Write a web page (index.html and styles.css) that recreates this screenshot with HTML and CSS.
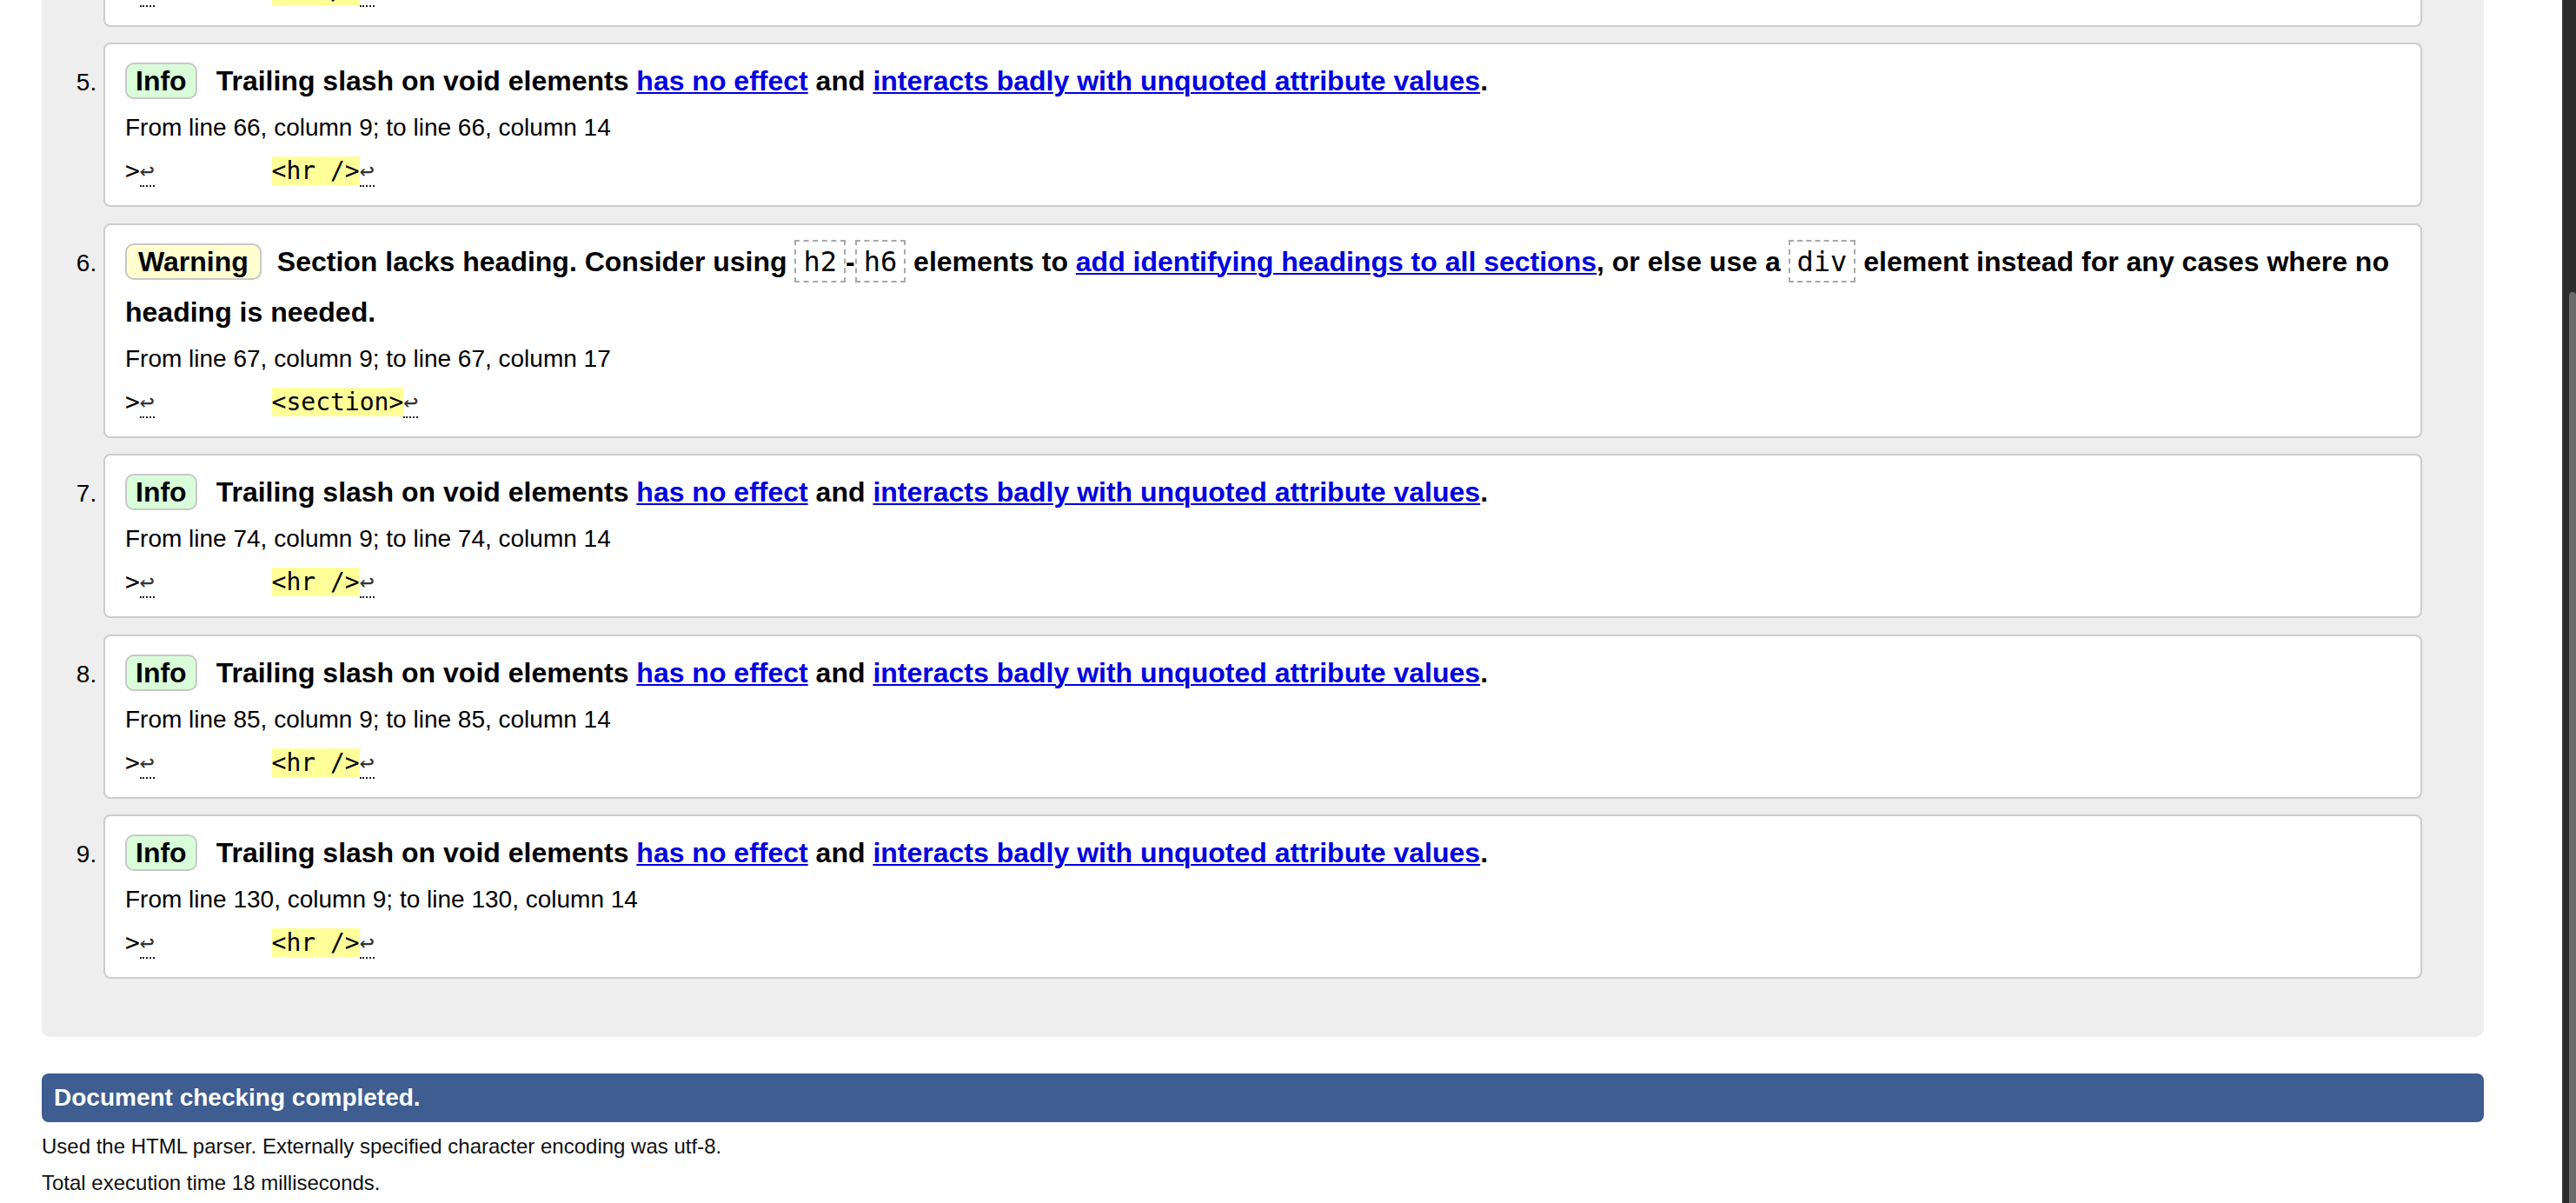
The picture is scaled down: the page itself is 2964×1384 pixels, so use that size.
FILE: index.html
```html
<!DOCTYPE html>
<html lang="en">
<head>
<meta charset="utf-8">
<title>Nu Html Checker</title>
<link rel="stylesheet" href="styles.css">
</head>
<body>
<div class="page">
  <main class="main">
    <section class="results">
      <ol class="messages" start="4">
        <li class="card">
          <p class="msg"><span class="badge info">Info</span>Trailing slash on void elements <a href="#">has no effect</a> and <a href="#">interacts badly with unquoted attribute values</a>.</p>
          <p class="loc">From line 58, column 9; to line 58, column 14</p>
          <p class="extract"><code>&gt;<span class="lf">↩</span>        <mark>&lt;hr /&gt;</mark><span class="lf">↩</span></code></p>
        </li>
        <li class="card">
          <p class="msg"><span class="badge info">Info</span>Trailing slash on void elements <a href="#">has no effect</a> and <a href="#">interacts badly with unquoted attribute values</a>.</p>
          <p class="loc">From line 66, column 9; to line 66, column 14</p>
          <p class="extract"><code>&gt;<span class="lf">↩</span>        <mark>&lt;hr /&gt;</mark><span class="lf">↩</span></code></p>
        </li>
        <li class="card">
          <p class="msg"><span class="badge warning">Warning</span>Section lacks heading. Consider using <code>h2</code>-<code>h6</code> elements to <a href="#">add identifying headings to all sections</a>, or else use a <code>div</code> element instead for any cases where no heading is needed.</p>
          <p class="loc">From line 67, column 9; to line 67, column 17</p>
          <p class="extract"><code>&gt;<span class="lf">↩</span>        <mark>&lt;section&gt;</mark><span class="lf">↩</span></code></p>
        </li>
        <li class="card">
          <p class="msg"><span class="badge info">Info</span>Trailing slash on void elements <a href="#">has no effect</a> and <a href="#">interacts badly with unquoted attribute values</a>.</p>
          <p class="loc">From line 74, column 9; to line 74, column 14</p>
          <p class="extract"><code>&gt;<span class="lf">↩</span>        <mark>&lt;hr /&gt;</mark><span class="lf">↩</span></code></p>
        </li>
        <li class="card">
          <p class="msg"><span class="badge info">Info</span>Trailing slash on void elements <a href="#">has no effect</a> and <a href="#">interacts badly with unquoted attribute values</a>.</p>
          <p class="loc">From line 85, column 9; to line 85, column 14</p>
          <p class="extract"><code>&gt;<span class="lf">↩</span>        <mark>&lt;hr /&gt;</mark><span class="lf">↩</span></code></p>
        </li>
        <li class="card">
          <p class="msg"><span class="badge info">Info</span>Trailing slash on void elements <a href="#">has no effect</a> and <a href="#">interacts badly with unquoted attribute values</a>.</p>
          <p class="loc">From line 130, column 9; to line 130, column 14</p>
          <p class="extract"><code>&gt;<span class="lf">↩</span>        <mark>&lt;hr /&gt;</mark><span class="lf">↩</span></code></p>
        </li>
      </ol>
    </section>
    <p class="status">Document checking completed.</p>
    <p class="details">Used the HTML parser. Externally specified character encoding was utf-8.</p>
    <p class="details">Total execution time 18 milliseconds.</p>
  </main>
  <div class="scrollbar"><div class="thumb"></div></div>
</div>
</body>
</html>
```

FILE: styles.css
```css
html, body {
  margin: 0;
  padding: 0;
  background: #fff;
}

body {
  font-family: "Liberation Sans", Arial, sans-serif;
  color: #000;
}

.page {
  display: flex;
  height: 1384px;
  overflow: hidden;
}

.main {
  flex: 1;
  min-width: 0;
  padding: 0 90px 0 48px;
}

.results {
  margin-top: -176.5px;
  padding: 18px 71px 67px;
  background: #eeeeee;
  border-radius: 10px;
}

.messages {
  margin: 0;
  padding: 0;
  list-style: decimal outside;
}

.card {
  background: #fff;
  border: 2px solid #cccccc;
  border-radius: 8px;
  padding: 13px 23px 14px;
  font-size: 28px;
  line-height: 50px;
}

.card + .card {
  margin-top: 18.5px;
}

.card::marker {
  font: 28px "Liberation Sans", Arial, sans-serif;
  color: #000;
}

.msg {
  margin: 0;
  font: bold 32px/58px "Liberation Sans", Arial, sans-serif;
}

.badge {
  display: inline-block;
  line-height: 38px;
  padding: 0 10px;
  border: 2px solid #c8c8c8;
  border-radius: 10px;
  margin-right: 22px;
}

.badge.info {
  background: #d9fdd9;
}

.badge.warning {
  background: #ffffcf;
  padding: 0 13px;
  margin-right: 18px;
}

.msg a {
  color: #0000e0;
  text-decoration-thickness: 2px;
  text-underline-offset: 2px;
}

.msg code {
  font: normal 32px/58px "DejaVu Sans Mono", monospace;
  border: 2px dashed #a8a8a8;
  padding: 4px 8px 3px;
}

.loc {
  margin: 0;
  font: 28px/50px "Liberation Sans", Arial, sans-serif;
}

.extract {
  margin: 0;
  font: 28px/50px "DejaVu Sans Mono", monospace;
  white-space: pre;
}

.extract code {
  font: inherit;
}

.extract mark {
  background: #ffff99;
  color: #000;
}

.lf {
  color: #333;
  border-bottom: 2px dotted #222;
}

.status {
  margin: 42px 0 0;
  padding: 0 14px;
  background: #3e5d91;
  color: #fff;
  border-radius: 8px;
  font: bold 28px/56px "Liberation Sans", Arial, sans-serif;
}

.details {
  margin: 14px 0 0;
  font: 24px/28px "Liberation Sans", Arial, sans-serif;
  color: #111;
}

.scrollbar {
  width: 16px;
  flex: none;
  display: flex;
  flex-direction: column;
  background: #2c2c2c;
  border-left: 1px solid #3a3a3a;
  box-sizing: border-box;
}

.thumb {
  flex: 1;
  margin: 336px 0 0 7px;
  background: #6b6b6b;
  border-radius: 5px 5px 0 0;
}
```
